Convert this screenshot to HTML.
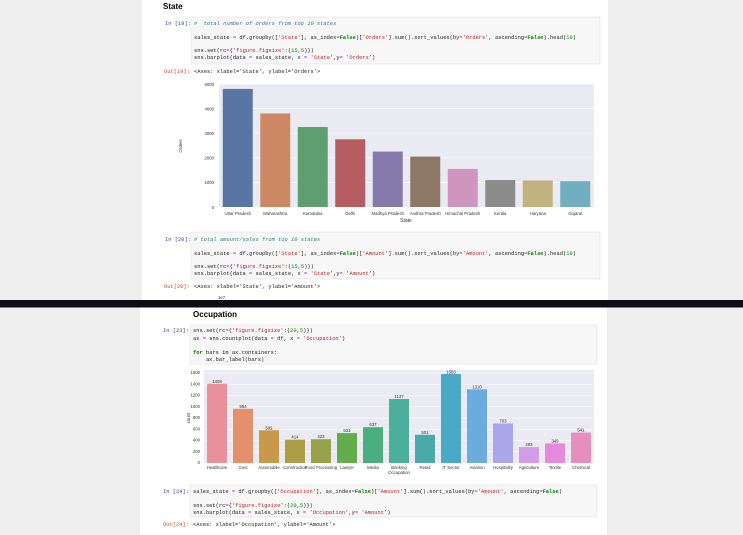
<!DOCTYPE html>
<html><head><meta charset="utf-8"><style>
html,body{margin:0;padding:0;background:#eee;width:743px;height:535px;overflow:hidden}
svg{display:block}
.m{font-family:"Liberation Mono",monospace;font-size:5.4px;fill:#222;white-space:pre}
.s{font-family:"Liberation Sans",sans-serif;font-size:4.3px;fill:#333}
.in{fill:#303f9f}.out{fill:#d84315}
.k{fill:#008000;font-weight:bold}.st{fill:#ba2121}.n{fill:#080}.c{fill:#408080;font-style:italic}.o{fill:#aa22ff}
</style></head><body>
<svg width="743" height="535" viewBox="0 0 743 535" xmlns="http://www.w3.org/2000/svg">
<rect width="743" height="535" fill="#eeeeee"/>
<rect x="142" y="0" width="466" height="300" fill="#fff"/>
<text x="163" y="9" font-family="Liberation Sans" font-weight="bold" font-size="8" fill="#000">State</text>
<rect x="191" y="17" width="409" height="47" fill="#f7f7f7" stroke="#e0e0e0" stroke-width="0.6"/>
<text x="165" y="25" class="m in">In [19]:</text>
<text x="194" y="25" class="m c">#  total number of orders from top 10 states</text>
<text x="194" y="39" class="m">sales_state <tspan class="o">=</tspan> df.groupby([<tspan class="st">'State'</tspan>], as_index<tspan class="o">=</tspan><tspan class="k">False</tspan>)[<tspan class="st">'Orders'</tspan>].sum().sort_values(by<tspan class="o">=</tspan><tspan class="st">'Orders'</tspan>, ascending<tspan class="o">=</tspan><tspan class="k">False</tspan>).head(<tspan class="n">10</tspan>)</text>
<text x="194" y="52" class="m">sns.set(rc<tspan class="o">=</tspan>{<tspan class="st">'figure.figsize'</tspan>:(<tspan class="n">15</tspan>,<tspan class="n">5</tspan>)})</text>
<text x="194" y="59" class="m">sns.barplot(data <tspan class="o">=</tspan> sales_state, x <tspan class="o">=</tspan> <tspan class="st">'State'</tspan>,y<tspan class="o">=</tspan> <tspan class="st">'Orders'</tspan>)</text>
<text x="164" y="73" class="m out">Out[19]:</text>
<text x="194" y="73" class="m">&lt;Axes: xlabel='State', ylabel='Orders'&gt;</text>
<rect x="219" y="84" width="375" height="123" fill="#eaeaf2"/>
<g stroke="#fff" stroke-width="0.7">
<line x1="219" x2="594" y1="84" y2="84"/><line x1="219" x2="594" y1="108.6" y2="108.6"/><line x1="219" x2="594" y1="133.2" y2="133.2"/><line x1="219" x2="594" y1="157.8" y2="157.8"/><line x1="219" x2="594" y1="182.4" y2="182.4"/>
</g>
<g class="s" text-anchor="end">
<text x="214" y="86">5000</text><text x="214" y="110.5">4000</text><text x="214" y="135">3000</text><text x="214" y="159.6">2000</text><text x="214" y="184.2">1000</text><text x="214" y="208.8">0</text>
</g>
<text class="s" transform="translate(182,146) rotate(-90)" text-anchor="middle" font-size="5">Orders</text>
<g>
<rect x="222.75" y="88.9" width="30" height="118.1" fill="#5975a4"/>
<rect x="260.25" y="113.5" width="30" height="93.5" fill="#cc8963"/>
<rect x="297.75" y="127" width="30" height="80" fill="#5f9e6e"/>
<rect x="335.25" y="139.3" width="30" height="67.7" fill="#b55d60"/>
<rect x="372.75" y="151.6" width="30" height="55.4" fill="#857aab"/>
<rect x="410.25" y="156.6" width="30" height="50.4" fill="#8d7866"/>
<rect x="447.75" y="168.9" width="30" height="38.1" fill="#d095bf"/>
<rect x="485.25" y="180" width="30" height="27" fill="#8c8c8c"/>
<rect x="522.75" y="180.4" width="30" height="26.6" fill="#c1b37f"/>
<rect x="560.25" y="181.2" width="30" height="25.8" fill="#71aec0"/>
</g>
<g class="s" text-anchor="middle">
<text x="237.75" y="215">Uttar Pradesh</text><text x="275.25" y="215">Maharashtra</text><text x="312.75" y="215">Karnataka</text><text x="350.25" y="215">Delhi</text><text x="387.75" y="215">Madhya Pradesh</text><text x="425.25" y="215">Andhra Pradesh</text><text x="462.75" y="215">Himachal Pradesh</text><text x="500.25" y="215">Kerala</text><text x="537.75" y="215">Haryana</text><text x="575.25" y="215">Gujarat</text>
<text x="406" y="222" font-size="5">State</text>
</g>
<rect x="191" y="232" width="409" height="47" fill="#f7f7f7" stroke="#e0e0e0" stroke-width="0.6"/>
<text x="165" y="241" class="m in">In [20]:</text>
<text x="194" y="241" class="m c"># total amount/sales from top 10 states</text>
<text x="194" y="255" class="m">sales_state <tspan class="o">=</tspan> df.groupby([<tspan class="st">'State'</tspan>], as_index<tspan class="o">=</tspan><tspan class="k">False</tspan>)[<tspan class="st">'Amount'</tspan>].sum().sort_values(by<tspan class="o">=</tspan><tspan class="st">'Amount'</tspan>, ascending<tspan class="o">=</tspan><tspan class="k">False</tspan>).head(<tspan class="n">10</tspan>)</text>
<text x="194" y="268" class="m">sns.set(rc<tspan class="o">=</tspan>{<tspan class="st">'figure.figsize'</tspan>:(<tspan class="n">15</tspan>,<tspan class="n">5</tspan>)})</text>
<text x="194" y="275" class="m">sns.barplot(data <tspan class="o">=</tspan> sales_state, x <tspan class="o">=</tspan> <tspan class="st">'State'</tspan>,y<tspan class="o">=</tspan> <tspan class="st">'Amount'</tspan>)</text>
<text x="164" y="288" class="m out">Out[20]:</text>
<text x="194" y="288" class="m">&lt;Axes: xlabel='State', ylabel='Amount'&gt;</text>
<text x="218" y="299" class="s" font-size="3.5">1e7</text>
<rect x="0" y="300" width="743" height="7.5" fill="#0c0e14"/>
<rect x="140" y="307.5" width="467" height="228" fill="#fff"/>
<text x="193" y="317" font-family="Liberation Sans" font-weight="bold" font-size="8" fill="#000">Occupation</text>
<rect x="190" y="325" width="407" height="39" fill="#f7f7f7" stroke="#e0e0e0" stroke-width="0.6"/>
<text x="163" y="332" class="m in">In [23]:</text>
<text x="193" y="332" class="m">sns.set(rc<tspan class="o">=</tspan>{<tspan class="st">'figure.figsize'</tspan>:(<tspan class="n">20</tspan>,<tspan class="n">5</tspan>)})</text>
<text x="193" y="340" class="m">ax <tspan class="o">=</tspan> sns.countplot(data <tspan class="o">=</tspan> df, x <tspan class="o">=</tspan> <tspan class="st">'Occupation'</tspan>)</text>
<text x="193" y="354" class="m"><tspan class="k">for</tspan> bars <tspan class="k">in</tspan> ax.containers:</text>
<text x="193" y="361" class="m">    ax.bar_label(bars)</text>
<rect x="204" y="370" width="390" height="93" fill="#eaeaf2"/>
<g stroke="#fff" stroke-width="0.6">
<line x1="204" x2="594" y1="373" y2="373"/><line x1="204" x2="594" y1="384.25" y2="384.25"/><line x1="204" x2="594" y1="395.5" y2="395.5"/><line x1="204" x2="594" y1="406.75" y2="406.75"/><line x1="204" x2="594" y1="418" y2="418"/><line x1="204" x2="594" y1="429.25" y2="429.25"/><line x1="204" x2="594" y1="440.5" y2="440.5"/><line x1="204" x2="594" y1="451.75" y2="451.75"/>
</g>
<g class="s" text-anchor="end" font-size="3">
<text x="200" y="374">1600</text><text x="200" y="385.3">1400</text><text x="200" y="396.5">1200</text><text x="200" y="407.8">1000</text><text x="200" y="419">800</text><text x="200" y="430.3">600</text><text x="200" y="441.5">400</text><text x="200" y="452.8">200</text><text x="200" y="464">0</text>
</g>
<text class="s" transform="translate(190,418) rotate(-90)" text-anchor="middle" font-size="3.3">count</text>
<g>
<rect x="207" y="383.8" width="20" height="79.2" fill="#e8919c"/>
<rect x="233" y="408.8" width="20" height="54.2" fill="#e3906c"/>
<rect x="259" y="430.3" width="20" height="32.7" fill="#c8994a"/>
<rect x="285" y="439.7" width="20" height="23.3" fill="#ac9e45"/>
<rect x="311" y="439.2" width="20" height="23.8" fill="#98a248"/>
<rect x="337" y="433.1" width="20" height="29.9" fill="#62ae4c"/>
<rect x="363" y="427.2" width="20" height="35.8" fill="#4aae7f"/>
<rect x="389" y="399" width="20" height="64" fill="#4caf9c"/>
<rect x="415" y="434.8" width="20" height="28.2" fill="#4ba9ab"/>
<rect x="441" y="374" width="20" height="89" fill="#4aa9c4"/>
<rect x="467" y="389.3" width="20" height="73.7" fill="#6aacde"/>
<rect x="493" y="423.5" width="20" height="39.5" fill="#a9a7ea"/>
<rect x="519" y="447.1" width="20" height="15.9" fill="#d49be6"/>
<rect x="545" y="443.4" width="20" height="19.6" fill="#e68ade"/>
<rect x="571" y="432.6" width="20" height="30.4" fill="#e68fbd"/>
</g>
<g class="s" text-anchor="middle" font-size="3.6">
<text x="217" y="382.8">1408</text><text x="243" y="407.8">964</text><text x="269" y="429.3">581</text><text x="295" y="438.7">414</text><text x="321" y="438.2">423</text><text x="347" y="432.1">531</text><text x="373" y="426.2">637</text><text x="399" y="398">1137</text><text x="425" y="433.8">501</text><text x="451" y="373.5">1583</text><text x="477" y="388.3">1310</text><text x="503" y="422.5">703</text><text x="529" y="446.1">283</text><text x="555" y="442.4">349</text><text x="581" y="431.6">541</text>
</g>
<g class="s" text-anchor="middle" font-size="3.5">
<text x="217" y="469">Healthcare</text><text x="243" y="469">Govt</text><text x="269" y="469">Automobile</text><text x="295" y="469">Construction</text><text x="321" y="469">Food Processing</text><text x="347" y="469">Lawyer</text><text x="373" y="469">Media</text><text x="399" y="469">Banking</text><text x="399" y="474">Occupation</text><text x="425" y="469">Retail</text><text x="451" y="469">IT Sector</text><text x="477" y="469">Aviation</text><text x="503" y="469">Hospitality</text><text x="529" y="469">Agriculture</text><text x="555" y="469">Textile</text><text x="581" y="469">Chemical</text>
</g>
<rect x="190" y="485" width="407" height="32" fill="#f7f7f7" stroke="#e0e0e0" stroke-width="0.6"/>
<text x="163" y="493" class="m in">In [24]:</text>
<text x="193" y="493" class="m">sales_state <tspan class="o">=</tspan> df.groupby([<tspan class="st">'Occupation'</tspan>], as_index<tspan class="o">=</tspan><tspan class="k">False</tspan>)[<tspan class="st">'Amount'</tspan>].sum().sort_values(by<tspan class="o">=</tspan><tspan class="st">'Amount'</tspan>, ascending<tspan class="o">=</tspan><tspan class="k">False</tspan>)</text>
<text x="193" y="507" class="m">sns.set(rc<tspan class="o">=</tspan>{<tspan class="st">'figure.figsize'</tspan>:(<tspan class="n">20</tspan>,<tspan class="n">5</tspan>)})</text>
<text x="193" y="514" class="m">sns.barplot(data <tspan class="o">=</tspan> sales_state, x <tspan class="o">=</tspan> <tspan class="st">'Occupation'</tspan>,y<tspan class="o">=</tspan> <tspan class="st">'Amount'</tspan>)</text>
<text x="163" y="526" class="m out">Out[24]:</text>
<text x="193" y="526" class="m">&lt;Axes: xlabel='Occupation', ylabel='Amount'&gt;</text>
</svg>
</body></html>
